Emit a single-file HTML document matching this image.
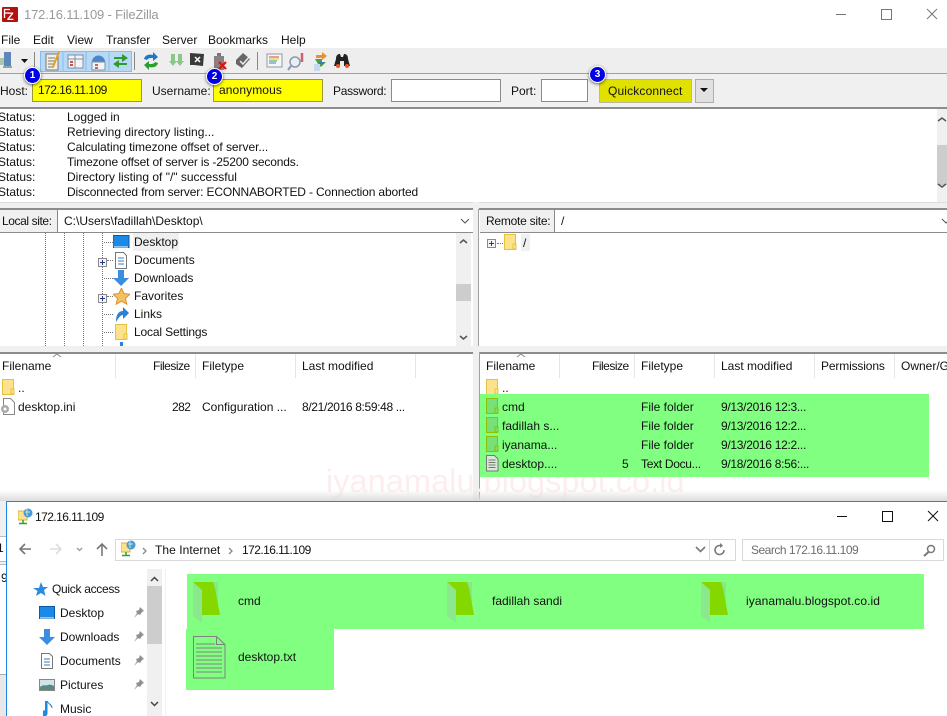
<!DOCTYPE html>
<html>
<head>
<meta charset="utf-8">
<style>
html,body{margin:0;padding:0;background:#fff}
#p{position:relative;width:947px;height:716px;overflow:hidden;background:#fff;font-family:"Liberation Sans",sans-serif;font-size:12px;color:#111}
.a{position:absolute}
.t{position:absolute;white-space:nowrap;line-height:16px;height:16px}
.n{letter-spacing:-.55px}
.d{letter-spacing:-.3px}
.s{position:absolute}
.h{position:absolute;width:1px;background:#e5e5e5}
.b{position:absolute;width:15px;height:15px;border-radius:50%;background:#0000e6;color:#fff;font-size:10px;font-weight:bold;text-align:center;line-height:15px;border:1.5px solid #fff;box-shadow:0 1px 3px rgba(0,0,0,.6);z-index:5}
.in{position:absolute;box-sizing:border-box;height:23px;background:#fff;border:1px solid #8a8a8a}
.y{background:#ffff00;border-color:#9a9a30}
.dv{position:absolute;width:1px;height:0;border-left:1px dotted #777}
.dh{position:absolute;height:0;border-top:1px dotted #777}
.pl{position:absolute;box-sizing:border-box;width:9px;height:9px;border:1px solid #8a8a8a;background:#f4f4f4}
.pl:before{content:"";position:absolute;left:1px;top:3px;width:5px;height:1px;background:#223a8a}
.pl:after{content:"";position:absolute;left:3px;top:1px;width:1px;height:5px;background:#223a8a}
</style>
</head>
<body>
<div id="p">

<!-- FileZilla title -->
<svg class="s" style="left:2px;top:7px" width="16" height="15" viewBox="0 0 16 15"><rect width="16" height="15" rx="1" fill="#b2120e"/><text x="5" y="13" font-family="Liberation Sans" font-size="11" font-weight="bold" fill="#fff">Z</text><path d="M2.500 11V2.500H8M2.500 6H7" stroke="#fff" stroke-width="1.300" fill="none"/></svg>
<div class="t" style="left:24px;top:7px;color:#9a9a9a;font-size:13px;letter-spacing:-.16px">172.16.11.109 - FileZilla</div>
<div class="a" style="left:836px;top:14px;width:10px;height:1px;background:#777"></div>
<div class="a" style="left:881px;top:9px;width:9px;height:9px;border:1px solid #777"></div>
<svg class="s" style="left:926px;top:8px" width="12" height="12"><path d="M1 1L11 11M11 1L1 11" stroke="#777" stroke-width="1"/></svg>

<!-- Menu -->
<div class="t" style="left:1px;top:32px">File</div>
<div class="t" style="left:33px;top:32px">Edit</div>
<div class="t" style="left:67px;top:32px">View</div>
<div class="t" style="left:106px;top:32px">Transfer</div>
<div class="t" style="left:162px;top:32px">Server</div>
<div class="t" style="left:208px;top:32px">Bookmarks</div>
<div class="t" style="left:281px;top:32px">Help</div>

<!-- Toolbar -->
<div class="a" style="left:0;top:48px;width:947px;height:25px;background:#eeeeee"></div>
<svg class="s" style="left:0;top:49px" width="360" height="24" viewBox="0 0 360 24">
  <rect x="0" y="9" width="4" height="7" fill="#a8c8a8"/><rect x="4" y="3" width="7" height="14" fill="#5f86b8"/><rect x="3" y="17" width="9" height="2" fill="#8aa"/>
  <path d="M21 10h7l-3.500 4z" fill="#111"/>
  <rect x="34" y="3" width="1" height="18" fill="#888"/>
  <rect x="40.500" y="2.500" width="91" height="20" fill="#b8d9f5" stroke="#86bdea"/>
  <path d="M63 3v20M86 3v20M109 3v20" stroke="#86bdea"/>
  <rect x="46" y="5" width="12" height="16" fill="#f4f0e0" stroke="#777"/><path d="M48 9h7M48 12h7M48 15h6M48 18h6" stroke="#777"/><path d="M59 3L53 18" stroke="#e8a020" stroke-width="2"/>
  <rect x="68" y="6" width="15" height="13" fill="#f4f4f4" stroke="#8090a8"/><path d="M75 6v13M68 10h15" stroke="#8090a8"/><rect x="70" y="12" width="3" height="2" fill="#d05050"/><rect x="70" y="15" width="3" height="2" fill="#d05050"/>
  <path d="M92 13a6.500 6.500 0 0 1 13 0z" fill="#4a86c8"/><rect x="92" y="13" width="13" height="8" fill="#f4f4f4" stroke="#8090a8"/><rect x="95" y="15" width="3" height="2" fill="#d06060"/><rect x="95" y="18" width="3" height="2" fill="#d06060"/>
  <path d="M114 8h8V5l6 4-6 4v-3h-8z" fill="#2e9a2e"/><path d="M127 14h-8v-3l-6 4 6 4v-3h8z" fill="#2e9a2e"/>
  <rect x="134" y="3" width="1" height="18" fill="#888"/>
  <path d="M144 10c1-4 5-5 9-4V3l5 5-5 4V9c-3 0-5 0-6 2z" fill="#1a78c8"/><path d="M158 14c-1 4-5 5-9 4v3l-5-5 5-4v3c3 0 5 0 6-2z" fill="#2aa02a"/>
  <path d="M171 5h4v7h2l-4 5-4-5h2zM178 5h4v7h2l-4 5-4-5h2z" fill="#8ac88a"/>
  <path d="M190 4l14 1-1 12-9-1-4 0z" fill="#3a3a3a"/><path d="M195 8l5 5M200 8l-5 5" stroke="#fff" stroke-width="1.500"/>
  <path d="M214 7h10v14h-10z" fill="#8a8080"/><path d="M217 4h4v3h-4z" fill="#777"/><path d="M219 13l7 7M226 13l-7 7" stroke="#d91515" stroke-width="2.200"/>
  <path d="M236 11l7-7 7 6-8 9-6-4z" fill="#666"/><path d="M240 12l3 3 7-8" stroke="#eee" stroke-width="1.500" fill="none"/>
  <rect x="257" y="3" width="1" height="18" fill="#888"/>
  <rect x="267" y="5" width="15" height="13" fill="#f6f6f6" stroke="#8a9aaa"/><path d="M269 8h10" stroke="#e04040"/><path d="M269 10h10" stroke="#e8c020"/><path d="M269 12h8" stroke="#40a040"/><path d="M269 14h7" stroke="#4080d0"/>
  <circle cx="295" cy="13" r="5" fill="#e8eef6" stroke="#8a9aaa" stroke-width="1.500"/><path d="M291 17l-3 4" stroke="#8a9aaa" stroke-width="2"/><path d="M302 4v9" stroke="#d06070" stroke-width="2.500"/>
  <path d="M316 6h6V3l5 4-5 4V9h-6z" fill="#e89030"/><path d="M315 10h7v3h4l-5 5-3-3z" fill="#48a048"/><rect x="314" y="15" width="6" height="7" fill="#c8d8f0"/><path d="M319 14l5 0" stroke="#3a78c8" stroke-width="2"/>
  <path d="M336 10c0-4 2-5 4-5l1 3h2l1-3c2 0 4 1 4 5l2 7h-6v-5h-4v5h-6z" fill="#222"/><circle cx="338" cy="17" r="2" fill="#e85a20"/><circle cx="347" cy="17" r="2" fill="#e85a20"/>
</svg>

<!-- Quickconnect bar -->
<div class="a" style="left:0;top:73px;width:947px;height:1px;background:#a0a0a0"></div>
<div class="a" style="left:0;top:74px;width:947px;height:33px;background:#f0f0f0"></div>
<div class="a" style="left:0;top:107px;width:947px;height:2px;background:#8c8c8c"></div>
<div class="t" style="left:0;top:83px">Host:</div>
<div class="in y" style="left:32px;top:79px;width:110px;height:23px"></div>
<div class="t n" style="left:38px;top:82px">172.16.11.109</div>
<div class="t" style="left:152px;top:83px">Username:</div>
<div class="in y" style="left:213px;top:79px;width:110px;height:23px"></div>
<div class="t" style="left:219px;top:82px;letter-spacing:.1px">anonymous</div>
<div class="t" style="left:333px;top:83px;letter-spacing:-.3px">Password:</div>
<div class="in" style="left:391px;top:79px;width:110px"></div>
<div class="t" style="left:511px;top:83px">Port:</div>
<div class="in" style="left:541px;top:79px;width:47px"></div>
<div class="a" style="left:599px;top:79px;width:93px;height:24px;box-sizing:border-box;background:#e1e100;border:1px solid #b8b8a0"></div>
<div class="t" style="left:608px;top:83px;letter-spacing:.15px">Quickconnect</div>
<div class="a" style="left:695px;top:79px;width:19px;height:24px;box-sizing:border-box;background:#e1e1e1;border:1px solid #adadad"></div>
<svg class="s" style="left:700px;top:88px" width="9" height="5"><path d="M0 0h8L4 4z" fill="#111"/></svg>
<div class="b" style="left:24px;top:67px">1</div>
<div class="b" style="left:206px;top:68px">2</div>
<div class="b" style="left:589px;top:66px">3</div>

<!-- Log -->
<div class="t" style="left:-2px;top:109px">Status:</div><div class="t" style="left:67px;top:109px">Logged in</div>
<div class="t" style="left:-2px;top:124px">Status:</div><div class="t" style="left:67px;top:124px">Retrieving directory listing...</div>
<div class="t" style="left:-2px;top:139px">Status:</div><div class="t" style="left:67px;top:139px;letter-spacing:-.05px">Calculating timezone offset of server...</div>
<div class="t" style="left:-2px;top:154px">Status:</div><div class="t" style="left:67px;top:154px;letter-spacing:-.16px">Timezone offset of server is -25200 seconds.</div>
<div class="t" style="left:-2px;top:169px">Status:</div><div class="t" style="left:67px;top:169px">Directory listing of "/" successful</div>
<div class="t" style="left:-2px;top:184px">Status:</div><div class="t" style="left:67px;top:184px;letter-spacing:-.15px">Disconnected from server: ECONNABORTED - Connection aborted</div>
<div class="a" style="left:937px;top:109px;width:10px;height:94px;background:#f0f0f0"></div>
<div class="a" style="left:937px;top:145px;width:10px;height:40px;background:#cdcdcd"></div>
<svg class="s" style="left:937px;top:116px" width="10" height="80"><path d="M1 5l4-3 4 3" stroke="#555" stroke-width="1.500" fill="none"/><path d="M1 68l4 3 4-3" stroke="#555" stroke-width="1.500" fill="none"/></svg>

<div class="a" style="left:0;top:202px;width:947px;height:7px;background:#f0f0f0;border-top:1px solid #dcdcdc;box-sizing:border-box"></div>
<div class="a" style="left:0;top:208px;width:473px;height:2px;background:#8c8c8c"></div>
<div class="a" style="left:479px;top:208px;width:468px;height:2px;background:#8c8c8c"></div>
<div class="a" style="left:473px;top:202px;width:6px;height:150px;background:#f0f0f0"></div>
<div class="a" style="left:478px;top:209px;width:1px;height:144px;background:#a0a0a0"></div>

<!-- Local site -->
<div class="a" style="left:0;top:210px;width:58px;height:22px;background:#f0f0f0;border-right:1px solid #888;box-sizing:border-box"></div>
<div class="t" style="left:2px;top:213px;letter-spacing:-.4px">Local site:</div>
<div class="a" style="left:0;top:232px;width:473px;height:1px;background:#8c8c8c"></div>
<div class="t" style="left:64px;top:213px">C:\Users\fadillah\Desktop\</div>
<svg class="s" style="left:460px;top:218px" width="10" height="6"><path d="M1 1l4 4 4-4" stroke="#555" fill="none"/></svg>

<!-- Local tree -->
<div class="dv" style="left:45px;top:233px;height:113px"></div>
<div class="dv" style="left:64px;top:233px;height:113px"></div>
<div class="dv" style="left:83px;top:233px;height:113px"></div>
<div class="dv" style="left:102px;top:233px;height:113px"></div>
<div class="dh" style="left:104px;top:242px;width:9px"></div>
<div class="dh" style="left:107px;top:260px;width:6px"></div>
<div class="dh" style="left:104px;top:278px;width:9px"></div>
<div class="dh" style="left:107px;top:296px;width:6px"></div>
<div class="dh" style="left:104px;top:314px;width:9px"></div>
<div class="dh" style="left:104px;top:332px;width:9px"></div>
<div class="pl" style="left:98px;top:258px"></div>
<div class="pl" style="left:98px;top:294px"></div>
<svg class="s" style="left:113px;top:235px" width="17" height="14"><rect width="16" height="12" y=".5" fill="#1a8ae6" stroke="#0a5aa8"/><path d="M1 12h14" stroke="#fff"/></svg>
<svg class="s" style="left:115px;top:252px" width="12" height="17"><path d="M.5.500h8l3 3v13H.5z" fill="#fff" stroke="#777"/><path d="M3 6h6M3 9h6M3 12h6" stroke="#3a7ac0"/></svg>
<svg class="s" style="left:113px;top:270px" width="17" height="17"><path d="M5 0h6v8h5l-8 8-8-8h5z" fill="#3a8ee0"/></svg>
<svg class="s" style="left:113px;top:288px" width="17" height="17"><path d="M8.500 0l2.500 5.500 6 .7-4.500 4 1.300 6-5.300-3-5.300 3 1.300-6L0 6.200l6-.7z" fill="#f5c060" stroke="#e09030"/></svg>
<svg class="s" style="left:115px;top:306px" width="14" height="16"><path d="M1 16C1 8 4 5 8 5V1l6 6-6 6V9c-2 0-4 2-7 7z" fill="#2a82d8"/></svg>
<svg class="s" style="left:115px;top:324px" width="13" height="16"><path d="M.5.500h11v15H.5z" fill="#fde28c" stroke="#e8c040"/><rect x="9" y="10" width="3" height="5" fill="#fde28c" stroke="#e8c040"/></svg>
<svg class="s" style="left:115px;top:342px" width="13" height="4"><path d="M5 0h3v4H5z" fill="#2a82d8"/></svg>
<div class="a" style="left:133px;top:233px;width:46px;height:18px;background:#f0f0f0"></div>
<div class="t" style="left:134px;top:234px">Desktop</div>
<div class="t" style="left:134px;top:252px">Documents</div>
<div class="t" style="left:134px;top:270px">Downloads</div>
<div class="t" style="left:134px;top:288px">Favorites</div>
<div class="t" style="left:134px;top:306px">Links</div>
<div class="t" style="left:134px;top:324px;letter-spacing:-.15px">Local Settings</div>
<div class="a" style="left:456px;top:233px;width:15px;height:113px;background:#f0f0f0"></div>
<div class="a" style="left:456px;top:284px;width:15px;height:17px;background:#cdcdcd"></div>
<svg class="s" style="left:456px;top:237px" width="15" height="105"><path d="M4 6l3.500-3 3.500 3" stroke="#555" stroke-width="1.500" fill="none"/><path d="M4 99l3.500 3 3.500-3" stroke="#555" stroke-width="1.500" fill="none"/></svg>
<div class="a" style="left:0;top:346px;width:473px;height:7px;background:#f0f0f0"></div>
<div class="a" style="left:0;top:352px;width:473px;height:2px;background:#8c8c8c"></div>

<!-- Remote site -->
<div class="a" style="left:480px;top:210px;width:75px;height:22px;background:#f0f0f0;border-right:1px solid #888;box-sizing:border-box"></div>
<div class="t" style="left:486px;top:213px;letter-spacing:-.25px">Remote site:</div>
<div class="t" style="left:561px;top:213px">/</div>
<div class="a" style="left:480px;top:232px;width:467px;height:1px;background:#8c8c8c"></div>
<svg class="s" style="left:941px;top:218px" width="10" height="6"><path d="M1 1l4 4 4-4" stroke="#555" fill="none"/></svg>
<div class="pl" style="left:487px;top:239px"></div>
<div class="dh" style="left:497px;top:243px;width:6px"></div>
<svg class="s" style="left:504px;top:234px" width="13" height="16"><path d="M.5.500h11v15H.5z" fill="#fde28c" stroke="#e8c040"/><rect x="9" y="10" width="3" height="5" fill="#fde28c" stroke="#e8c040"/></svg>
<div class="a" style="left:521px;top:234px;width:9px;height:17px;background:#f0f0f0"></div>
<div class="t" style="left:523px;top:235px">/</div>
<div class="a" style="left:473px;top:346px;width:474px;height:7px;background:#f0f0f0"></div>
<div class="a" style="left:479px;top:352px;width:468px;height:2px;background:#8c8c8c"></div>
<div class="a" style="left:479px;top:352px;width:1px;height:150px;background:#a0a0a0"></div>
<div class="a" style="left:473px;top:353px;width:6px;height:150px;background:#f0f0f0"></div>

<!-- Watermark (sits behind the green highlight) -->
<div class="a" style="left:326px;top:461px;font-size:32.600px;line-height:40px;color:#fdeeee;white-space:nowrap">iyanamalu.blogspot.co.id</div>

<!-- Local list -->
<div class="t" style="left:2px;top:358px">Filename</div>
<svg class="s" style="left:52px;top:353px" width="10" height="5"><path d="M1 4l4-3 4 3" stroke="#888" fill="none"/></svg>
<div class="t" style="left:153px;top:358px;letter-spacing:-.5px">Filesize</div>
<div class="t" style="left:202px;top:358px">Filetype</div>
<div class="t" style="left:302px;top:358px">Last modified</div>
<div class="h" style="left:115px;top:354px;height:24px"></div>
<div class="h" style="left:195px;top:354px;height:24px"></div>
<div class="h" style="left:295px;top:354px;height:24px"></div>
<div class="h" style="left:415px;top:354px;height:24px"></div>
<svg class="s" style="left:2px;top:379px" width="13" height="16"><path d="M.5.500h11v15H.5z" fill="#fde28c" stroke="#e8c040"/><rect x="9" y="10" width="3" height="5" fill="#fde28c" stroke="#e8c040"/></svg>
<div class="t" style="left:18px;top:380px">..</div>
<svg class="s" style="left:0;top:398px" width="15" height="17"><path d="M3.500.500h7l4 4v12h-11z" fill="#fff" stroke="#888"/><circle cx="5" cy="11" r="4" fill="#aaa"/><circle cx="5" cy="11" r="1.500" fill="#fff"/></svg>
<div class="t" style="left:18px;top:399px">desktop.ini</div>
<div class="t n" style="left:172px;top:399px">282</div>
<div class="t" style="left:202px;top:399px">Configuration ...</div>
<div class="t" style="left:302px;top:399px;letter-spacing:-.35px">8/21/2016 8:59:48 ...</div>

<!-- Remote list -->
<div class="t" style="left:486px;top:358px">Filename</div>
<svg class="s" style="left:516px;top:353px" width="10" height="5"><path d="M1 4l4-3 4 3" stroke="#888" fill="none"/></svg>
<div class="t" style="left:592px;top:358px;letter-spacing:-.5px">Filesize</div>
<div class="t" style="left:641px;top:358px">Filetype</div>
<div class="t" style="left:721px;top:358px">Last modified</div>
<div class="t" style="left:821px;top:358px;letter-spacing:-.15px">Permissions</div>
<div class="t" style="left:901px;top:358px">Owner/G</div>
<div class="h" style="left:559px;top:354px;height:24px"></div>
<div class="h" style="left:634px;top:354px;height:24px"></div>
<div class="h" style="left:714px;top:354px;height:24px"></div>
<div class="h" style="left:814px;top:354px;height:24px"></div>
<div class="h" style="left:894px;top:354px;height:24px"></div>
<svg class="s" style="left:486px;top:379px" width="13" height="16"><path d="M.5.500h11v15H.5z" fill="#fde28c" stroke="#e8c040"/><rect x="9" y="10" width="3" height="5" fill="#fde28c" stroke="#e8c040"/></svg>
<div class="t" style="left:502px;top:380px">..</div>

<div class="a" style="left:480px;top:394px;width:449px;height:83px;background:#80ff80"></div>
<svg class="s" style="left:486px;top:398px" width="13" height="16"><path d="M.5.500h11v15H.5z" fill="#78e078" stroke="#8cc000"/><rect x="9" y="10" width="3" height="5" fill="#78e078" stroke="#8cc000"/></svg>
<svg class="s" style="left:486px;top:417px" width="13" height="16"><path d="M.5.500h11v15H.5z" fill="#78e078" stroke="#8cc000"/><rect x="9" y="10" width="3" height="5" fill="#78e078" stroke="#8cc000"/></svg>
<svg class="s" style="left:486px;top:436px" width="13" height="16"><path d="M.5.500h11v15H.5z" fill="#78e078" stroke="#8cc000"/><rect x="9" y="10" width="3" height="5" fill="#78e078" stroke="#8cc000"/></svg>
<svg class="s" style="left:486px;top:455px" width="13" height="17"><path d="M.5.500h8l3.500 3.500v12H.5z" fill="#d8e8d8" stroke="#777"/><path d="M2.500 5h7M2.500 7.500h7M2.500 10h7M2.500 12.500h7" stroke="#777"/></svg>
<div class="t" style="left:502px;top:399px">cmd</div>
<div class="t" style="left:502px;top:418px">fadillah s...</div>
<div class="t" style="left:502px;top:437px">iyanama...</div>
<div class="t" style="left:502px;top:456px">desktop....</div>
<div class="t" style="left:622px;top:456px">5</div>
<div class="t" style="left:641px;top:399px">File folder</div>
<div class="t" style="left:641px;top:418px">File folder</div>
<div class="t" style="left:641px;top:437px">File folder</div>
<div class="t d" style="left:641px;top:456px">Text Docu...</div>
<div class="t d" style="left:721px;top:399px">9/13/2016 12:3...</div>
<div class="t d" style="left:721px;top:418px">9/13/2016 12:2...</div>
<div class="t d" style="left:721px;top:437px">9/13/2016 12:2...</div>
<div class="t d" style="left:721px;top:456px">9/18/2016 8:56:...</div>

<!-- Shadow & left strip -->
<div class="a" style="left:0;top:490px;width:947px;height:11px;background:linear-gradient(rgba(255,255,255,0),#dcdcdc)"></div>
<div class="a" style="left:0;top:501px;width:6px;height:215px;background:#f0f0f0"></div>
<div class="a" style="left:0;top:536px;width:6px;height:24px;background:#fff;border-top:1px solid #bbb;border-bottom:1px solid #bbb"></div>
<div class="t" style="left:-3px;top:540px">1</div>
<div class="a" style="left:0;top:564px;width:6px;height:110px;background:#fff;border-top:1px solid #bbb"></div>
<div class="t" style="left:1px;top:570px">9</div>
<div class="a" style="left:0;top:674px;width:6px;height:42px;background:#e8e8e8;border-top:1px solid #aaa"></div>

<!-- Explorer window -->
<div class="a" style="left:6px;top:501px;width:941px;height:215px;background:#fff;border-top:1px solid #1e88e0;border-left:1px solid #1e88e0;box-sizing:border-box"></div>
<svg class="s" style="left:18px;top:508px" width="16" height="18"><rect x="0" y="3" width="9" height="9" fill="#fde28c" stroke="#d8b040"/><circle cx="10" cy="5" r="4.500" fill="#4a9ad8"/><path d="M7 4h5M9 1v7" stroke="#c8e8c8"/><path d="M5 12v3M1 15.500h8" stroke="#30a030" stroke-width="1.500"/></svg>
<div class="t n" style="left:35px;top:509px">172.16.11.109</div>
<div class="a" style="left:837px;top:516px;width:10px;height:1px;background:#111"></div>
<div class="a" style="left:882px;top:511px;width:9px;height:9px;border:1px solid #111"></div>
<svg class="s" style="left:927px;top:510px" width="12" height="12"><path d="M1 1L11 11M11 1L1 11" stroke="#111" stroke-width="1"/></svg>

<svg class="s" style="left:18px;top:540px" width="100" height="18"><path d="M2 9h11M7 4L2 9l5 5" stroke="#777" stroke-width="1.600" fill="none"/><path d="M32 9h11M38 4l5 5-5 5" stroke="#ddd" stroke-width="1.600" fill="none"/><path d="M59 8l2.500 2.500L64 8" stroke="#999" stroke-width="1.300" fill="none"/><path d="M84 16V4M79 9l5-5 5 5" stroke="#777" stroke-width="1.600" fill="none"/></svg>
<div class="a" style="left:115px;top:539px;width:621px;height:22px;box-sizing:border-box;border:1px solid #d9d9d9"></div>
<div class="a" style="left:709px;top:539px;width:1px;height:22px;background:#d9d9d9"></div>
<svg class="s" style="left:121px;top:540px" width="16" height="18"><rect x="0" y="3" width="9" height="9" fill="#fde28c" stroke="#d8b040"/><circle cx="10" cy="5" r="4.500" fill="#4a9ad8"/><path d="M7 4h5M9 1v7" stroke="#c8e8c8"/><path d="M5 12v3M1 15.500h8" stroke="#30a030" stroke-width="1.500"/></svg>
<svg class="s" style="left:141px;top:546px" width="8" height="10"><path d="M2 2l3 3-3 3" stroke="#888" stroke-width="1.300" fill="none"/></svg>
<div class="t" style="left:155px;top:542px;letter-spacing:.05px">The Internet</div>
<svg class="s" style="left:227px;top:546px" width="8" height="10"><path d="M2 2l3 3-3 3" stroke="#888" stroke-width="1.300" fill="none"/></svg>
<div class="t n" style="left:242px;top:542px">172.16.11.109</div>
<svg class="s" style="left:695px;top:546px" width="11" height="8"><path d="M1 1l4.500 4.500L10 1" stroke="#777" stroke-width="1.600" fill="none"/></svg>
<svg class="s" style="left:713px;top:543px" width="14" height="14"><path d="M11 7a4.500 4.500 0 1 1-2-3.700" stroke="#777" stroke-width="1.500" fill="none"/><path d="M7 0v5l3-2.500z" fill="#777"/></svg>
<div class="a" style="left:742px;top:539px;width:202px;height:22px;box-sizing:border-box;border:1px solid #d9d9d9"></div>
<div class="t" style="left:751px;top:542px;color:#6d6d6d;letter-spacing:-.5px">Search 172.16.11.109</div>
<svg class="s" style="left:923px;top:544px" width="13" height="13"><circle cx="8" cy="5" r="3.500" fill="none" stroke="#777" stroke-width="1.500"/><path d="M5.500 8L1 12" stroke="#777" stroke-width="2"/></svg>

<!-- Nav pane -->
<svg class="s" style="left:33px;top:582px" width="15" height="15"><path d="M8 0l2 5h5l-4 3 1.500 6L8 11l-5 3 1.500-5L0 6h6z" fill="#2a8ae0"/></svg>
<div class="t" style="left:52px;top:581px;letter-spacing:-.3px">Quick access</div>
<svg class="s" style="left:39px;top:606px" width="16" height="14"><rect width="15" height="12" x=".5" y=".5" fill="#1a8ae6" stroke="#0a5aa8"/><path d="M1 12h14" stroke="#fff"/></svg>
<div class="t" style="left:60px;top:605px">Desktop</div>
<svg class="s" style="left:39px;top:629px" width="16" height="16"><path d="M5 0h6v8h5l-8 8-8-8h5z" fill="#3a8ee0"/></svg>
<div class="t" style="left:60px;top:629px">Downloads</div>
<svg class="s" style="left:41px;top:653px" width="12" height="16"><path d="M.5.500h8l3 3v12H.5z" fill="#fff" stroke="#777"/><path d="M3 6h6M3 9h6M3 12h6" stroke="#3a7ac0"/></svg>
<div class="t" style="left:60px;top:653px">Documents</div>
<svg class="s" style="left:39px;top:679px" width="16" height="12"><rect x=".5" y=".5" width="15" height="11" fill="#cfe4ef" stroke="#888"/><path d="M1 8c3-3 6-1 8-2s4 0 6 1v4H1z" fill="#5a8a7a"/></svg>
<div class="t" style="left:60px;top:677px">Pictures</div>
<svg class="s" style="left:43px;top:701px" width="10" height="15"><path d="M4 0v12a2.500 2.500 0 1 1-1.500-2V0zM4 0c1 3 5 3 5 7" fill="#1a8ae6" stroke="#1a8ae6"/></svg>
<div class="t" style="left:60px;top:701px">Music</div>
<svg class="s" style="left:132px;top:606px" width="13" height="100" fill="#8f8f8f"><path d="M8 1l4 4-2 1-2 3-2-1-4 4 3-5-1-2 3-1z"/><path d="M8 25l4 4-2 1-2 3-2-1-4 4 3-5-1-2 3-1z"/><path d="M8 49l4 4-2 1-2 3-2-1-4 4 3-5-1-2 3-1z"/><path d="M8 73l4 4-2 1-2 3-2-1-4 4 3-5-1-2 3-1z"/></svg>
<div class="a" style="left:147px;top:569px;width:15px;height:147px;background:#f0f0f0"></div>
<div class="a" style="left:147px;top:586px;width:15px;height:58px;background:#cdcdcd"></div>
<svg class="s" style="left:147px;top:573px" width="15" height="140"><path d="M4 8l3.500-3.500L11 8" stroke="#444" stroke-width="1.500" fill="none"/><path d="M4 129l3.500 3.500L11 129" stroke="#444" stroke-width="1.500" fill="none"/></svg>
<div class="a" style="left:165px;top:569px;width:1px;height:147px;background:#f0f0f0"></div>

<!-- Green items -->
<div class="a" style="left:187px;top:574px;width:737px;height:55px;background:#80ff80"></div>
<div class="a" style="left:186px;top:629px;width:148px;height:61px;background:#80ff80"></div>
<svg class="s" style="left:193px;top:582px" width="28" height="41"><path d="M0 0h25v33H0z" fill="#86e886"/><path d="M0 0h20l2 6 5 27H9V8z" fill="#84d800"/><path d="M0 0l9 8v33l-9-7z" fill="#8ce88c"/></svg>
<svg class="s" style="left:447px;top:582px" width="28" height="41"><path d="M0 0h25v33H0z" fill="#86e886"/><path d="M0 0h20l2 6 5 27H9V8z" fill="#84d800"/><path d="M0 0l9 8v33l-9-7z" fill="#8ce88c"/></svg>
<svg class="s" style="left:701px;top:582px" width="28" height="41"><path d="M0 0h25v33H0z" fill="#86e886"/><path d="M0 0h20l2 6 5 27H9V8z" fill="#84d800"/><path d="M0 0l9 8v33l-9-7z" fill="#8ce88c"/></svg>
<div class="t" style="left:238px;top:593px">cmd</div>
<div class="t" style="left:492px;top:593px">fadillah sandi</div>
<div class="t" style="left:746px;top:593px;letter-spacing:.08px">iyanamalu.blogspot.co.id</div>
<svg class="s" style="left:193px;top:636px" width="33" height="43"><path d="M.5.500h23l8.500 8v33.500H.5z" fill="#80ff80" stroke="#808080"/><path d="M23.500.5v8h8.500" fill="none" stroke="#808080"/><path d="M3 8h19M3 12h26M3 16h26M3 20h26M3 24h26M3 28h26M3 32h26M3 36h26" stroke="#808080"/></svg>
<div class="t" style="left:238px;top:649px">desktop.txt</div>

</div>
</body>
</html>
